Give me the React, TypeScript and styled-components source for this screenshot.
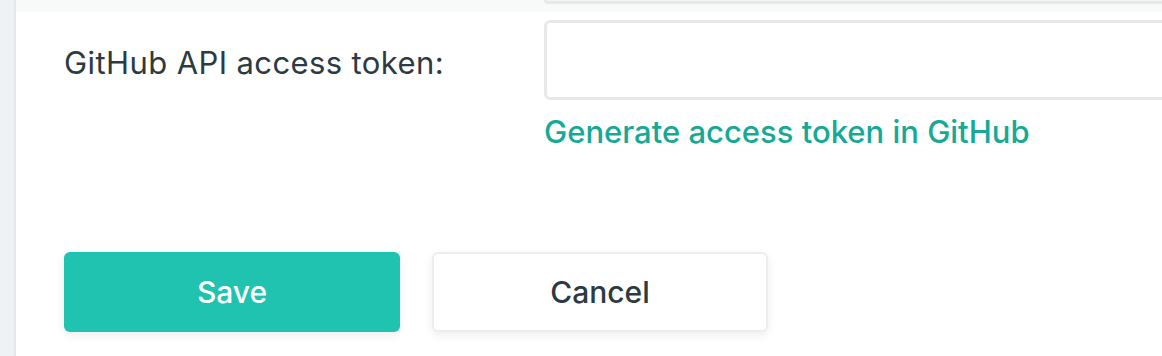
import React from 'react';
import styled, { createGlobalStyle } from 'styled-components';

const GlobalStyle = createGlobalStyle`
  html, body {
    margin: 0;
    padding: 0;
    background: #ffffff;
    overflow: hidden;
  }
  body {
    font-family: 'Inter', 'Roboto', 'Liberation Sans', sans-serif;
    color: #2c3a41;
  }
`;

const Page = styled.div`
  display: flex;
  height: 356px;
`;

const SideStrip = styled.div`
  width: 16px;
  flex-shrink: 0;
  background: #eef2f5;
  box-shadow: inset -3px 0 3px -2px rgba(0, 0, 0, 0.08);
`;

const Content = styled.div`
  flex: 1;
  min-width: 0;
  display: flex;
  flex-direction: column;
  overflow: hidden;
`;

const PrevRow = styled.div`
  height: 12px;
  background: #f8f9f9;
  display: grid;
  grid-template-columns: 528px 1fr;
`;

const PrevInputEdge = styled.div`
  height: 4px;
  margin-right: -20px;
  border: 3px solid #e7e9e9;
  border-top: none;
  border-radius: 0 0 6px 6px;
  box-sizing: border-box;
  background: #f3f4f4;
`;

const FieldRow = styled.div`
  display: grid;
  grid-template-columns: 528px 1fr;
  padding-top: 8px;
`;

const Label = styled.label`
  padding-left: 48px;
  padding-top: 3px;
  font-size: 31px;
  letter-spacing: 0.4px;
  line-height: 80px;
  height: 80px;
  color: #2c3a41;
`;

const FieldColumn = styled.div`
  display: flex;
  flex-direction: column;
`;

const TokenInput = styled.input`
  height: 80px;
  box-sizing: border-box;
  margin-right: -40px;
  border: 3px solid #e7e9e9;
  border-radius: 6px;
  background: #ffffff;
  outline: none;
`;

const HelpLink = styled.a`
  margin-top: 13px;
  font-size: 31px;
  font-weight: 500;
  color: #17a996;
  text-decoration: none;
`;

const Actions = styled.div`
  display: flex;
  gap: 32px;
  padding: 0 0 0 48px;
  margin-top: 102px;
`;

const Button = styled.button<{ $primary?: boolean }>`
  width: 336px;
  height: 80px;
  box-sizing: border-box;
  border-radius: 6px;
  font-family: inherit;
  font-size: 30px;
  font-weight: 500;
  cursor: pointer;
  background: ${p => (p.$primary ? '#20c2b0' : '#ffffff')};
  color: ${p => (p.$primary ? '#ffffff' : '#2c3a41')};
  border: ${p => (p.$primary ? 'none' : '2px solid #eceded')};
  box-shadow: 0 3px 10px rgba(0, 0, 0, 0.07);
`;

const App: React.FC = () => {
  return (
    <>
      <GlobalStyle />
      <Page>
        <SideStrip />
        <Content>
          <PrevRow>
            <div />
            <PrevInputEdge />
          </PrevRow>
          <FieldRow>
            <Label htmlFor="token">GitHub API access token:</Label>
            <FieldColumn>
              <TokenInput id="token" type="text" />
              <HelpLink href="#">Generate access token in GitHub</HelpLink>
            </FieldColumn>
          </FieldRow>
          <Actions>
            <Button $primary>Save</Button>
            <Button>Cancel</Button>
          </Actions>
        </Content>
      </Page>
    </>
  );
};

export default App;
